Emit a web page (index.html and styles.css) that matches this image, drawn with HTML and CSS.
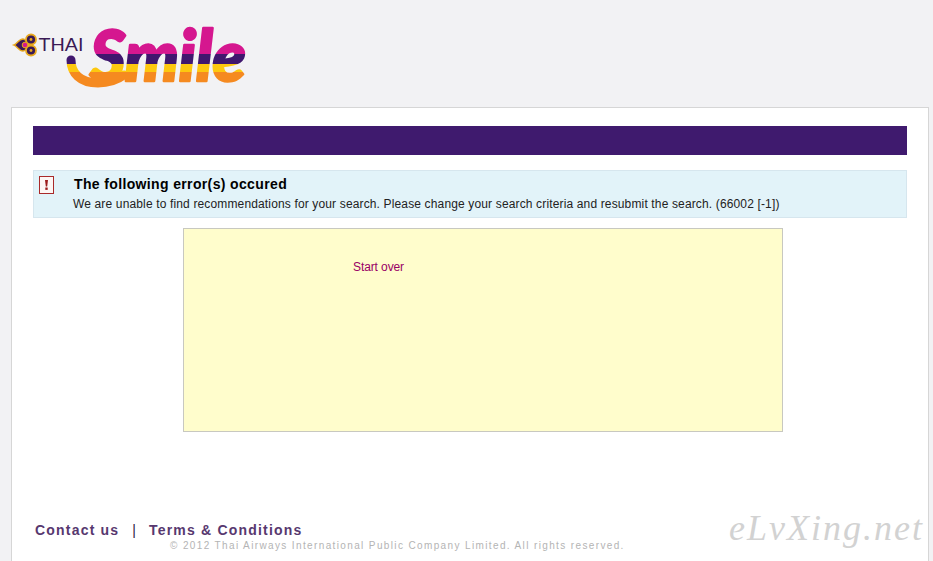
FILE: index.html
```html
<!DOCTYPE html>
<html lang="en">
<head>
<meta charset="utf-8">
<title>Thai Smile</title>
<link rel="stylesheet" href="styles.css">
</head>
<body>
<header class="header">
  <svg class="logo" width="320" height="100" viewBox="0 -16 320 100" role="img" aria-label="Thai Smile">
    <defs>
      <linearGradient id="bands" gradientUnits="userSpaceOnUse" x1="0" y1="0" x2="0" y2="100">
        <stop offset="0.33" stop-color="#d5178f"/>
        <stop offset="0.33" stop-color="#40176e"/>
        <stop offset="0.43" stop-color="#40176e"/>
        <stop offset="0.43" stop-color="#fdc80f"/>
        <stop offset="0.51" stop-color="#fdc80f"/>
        <stop offset="0.51" stop-color="#f58a20"/>
      </linearGradient>
    </defs>
    <g class="orchid">
      <path d="M14 24C17 23 19 18 23 18C26 18 27 21 28 24C27 27 26 30 23 30C19 30 17 25 14 24Z" fill="#3a1a55" stroke="#e8a81c" stroke-width="1.4"/>
      <circle cx="31" cy="18.5" r="5" fill="#3a1a55" stroke="#e8a81c" stroke-width="1.8"/>
      <circle cx="31" cy="29.5" r="5" fill="#3a1a55" stroke="#e8a81c" stroke-width="1.8"/>
      <circle cx="31" cy="18.5" r="1.4" fill="#e8a81c"/>
      <circle cx="31" cy="29.5" r="1.4" fill="#e8a81c"/>
      <circle cx="25" cy="24" r="2.8" fill="#d5178f" stroke="#e8a81c"/>
    </g>
    <text class="logo-thai" x="38.5" y="30" textLength="45" lengthAdjust="spacingAndGlyphs">THAI</text>
    <path d="M71 39C71 52 80 62 98 62C108 62 116 60 124 54" fill="none" stroke="url(#bands)" stroke-width="9" stroke-linecap="round"/>
    <text class="logo-smile" x="90" y="60" textLength="156" lengthAdjust="spacingAndGlyphs" fill="url(#bands)" stroke="url(#bands)">Smile</text>
  </svg>
</header>
<main class="card">
  <div class="bar"></div>
  <section class="notice">
    <svg class="alert" width="15" height="18" viewBox="0 0 15 18" aria-hidden="true">
      <rect x="0.5" y="0.5" width="14" height="17" fill="#fdf6f4" stroke="#a92a2a"/>
      <path d="M6 4H9L8.2 10.5H6.8Z" fill="#9c1c1c"/>
      <rect x="6.3" y="11.5" width="2.4" height="2.4" fill="#9c1c1c"/>
    </svg>
    <div class="notice-text">
      <h1 class="notice-title">The following error(s) occured</h1>
      <p class="notice-body">We are unable to find recommendations for your search. Please change your search criteria and resubmit the search. (66002 [-1])</p>
    </div>
  </section>
  <section class="panel">
    <a class="start" href="#">Start over</a>
  </section>
  <footer class="footer">
    <nav class="footer-links">
      <a class="footer-link" href="#">Contact us</a>
      <span class="footer-sep">|</span>
      <a class="footer-link" href="#">Terms &amp; Conditions</a>
    </nav>
    <p class="copyright">© 2012 Thai Airways International Public Company Limited. All rights reserved.</p>
    <div class="watermark">eLvXing.net</div>
  </footer>
</main>
</body>
</html>
```

FILE: styles.css
```css
html, body {
  margin: 0;
  padding: 0;
  height: 100%;
}
body {
  background: #f2f2f4;
  font-family: "Liberation Sans", Arial, sans-serif;
  overflow: hidden;
  display: flex;
  flex-direction: column;
}
.header {
  height: 107px;
  flex: none;
  box-sizing: border-box;
  padding: 5px 0 0 0;
}
.logo { display: block; }
.logo-thai {
  font: 18px "Liberation Sans", sans-serif;
  fill: #3a1a55;
}
.logo-smile {
  font: italic 900 70px Lato, sans-serif;
  stroke-width: 2.5;
  stroke-linejoin: round;
}
.card {
  flex: 1;
  margin: 0 4px 0 11px;
  background: #fff;
  border: 1px solid #d6d6d6;
  border-bottom: 0;
  box-sizing: border-box;
  padding: 18px 21px 0;
  display: flex;
  flex-direction: column;
  position: relative;
}
.bar {
  height: 29px;
  background: #3f1a6e;
  flex: none;
}
.notice {
  margin-top: 15px;
  height: 48px;
  box-sizing: border-box;
  background: #e2f3f9;
  border: 1px solid #d6e6ee;
  display: flex;
  padding: 5px 0 0 5px;
  flex: none;
}
.alert { flex: none; }
.notice-text { margin-left: 19px; }
.notice-title {
  margin: 0 0 0 1px;
  font-size: 14px;
  line-height: 17px;
  font-weight: bold;
  color: #000;
  letter-spacing: 0.36px;
}
.notice-body {
  margin: 4px 0 0;
  font-size: 12px;
  line-height: 14px;
  color: #222;
  letter-spacing: 0.145px;
  white-space: nowrap;
}
.panel {
  margin: 10px 0 0 150px;
  width: 600px;
  height: 204px;
  box-sizing: border-box;
  background: #fffdcc;
  border: 1px solid #c8c8c0;
  padding: 31px 0 0 169px;
  flex: none;
}
.start {
  font-size: 12px;
  line-height: 14px;
  color: #990066;
  letter-spacing: -0.1px;
  text-decoration: none;
  display: block;
}
.footer {
  margin: 89px 0 0;
  position: relative;
  flex: none;
}
.footer-links {
  display: flex;
  align-items: center;
  padding-left: 2px;
  height: 17px;
  color: #2e1a40;
  font-size: 14px;
  font-weight: bold;
}
.footer-link {
  color: #57386f;
  text-decoration: none;
  letter-spacing: 1.2px;
}
.footer-sep {
  margin: 0 13px 0 13px;
  font-weight: normal;
}
.copyright {
  margin: 1px 0 0 137px;
  font-size: 10px;
  line-height: 13px;
  letter-spacing: 1.37px;
  color: #b4b4b4;
  white-space: nowrap;
}
.watermark {
  position: absolute;
  right: -17px;
  top: -14px;
  font: italic 36px "Liberation Serif", serif;
  color: #d2d2d2;
  letter-spacing: 2px;
}
```
